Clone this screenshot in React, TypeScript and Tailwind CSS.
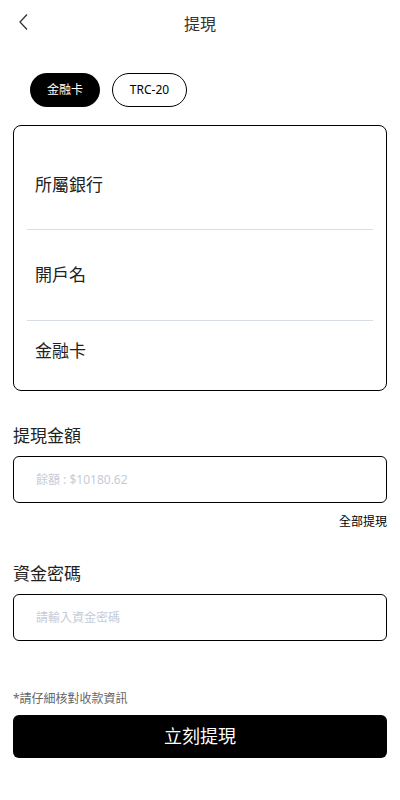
export default function App() {
  return (
    <div
      className="w-[400px] min-h-[800px] bg-white text-[#222] pb-10"
      style={{ fontFamily: '"Noto Sans", "Noto Sans CJK TC", sans-serif' }}
    >
      {/* header */}
      <div className="relative h-[48px] flex items-center justify-center">
        <svg
          className="absolute left-[17px] top-[13px]"
          width="14"
          height="18"
          viewBox="0 0 14 18"
          fill="none"
        >
          <path d="M10 1.5 L3 9 L10 16.5" stroke="#333" strokeWidth="1.3" />
        </svg>
        <span className="text-[16px] text-[#333]">提現</span>
      </div>

      {/* tabs */}
      <div className="flex gap-3 pl-[30px] mt-[25px]">
        <button className="w-[70px] h-[34px] rounded-full bg-black text-white text-[12px]">
          金融卡
        </button>
        <button className="w-[75px] h-[34px] rounded-full border border-black text-black text-[12px]">
          TRC-20
        </button>
      </div>

      <div className="px-[13px]">
        {/* card */}
        <div className="mt-[18px] h-[266px] border border-black rounded-[8px] pt-[13px] px-[13px]">
          <div className="h-[91px] flex items-end pb-[32px] pl-[8px] border-b border-[#d7dde5] text-[17px]">
            所屬銀行
          </div>
          <div className="h-[91px] flex items-center pl-[8px] border-b border-[#d7dde5] text-[17px]">
            開戶名
          </div>
          <div className="h-[60px] flex items-center pl-[8px] text-[17px]">
            金融卡
          </div>
        </div>

        {/* amount */}
        <div className="mt-[33px] text-[17px] leading-[24px]">提現金額</div>
        <div className="mt-[8px] h-[47px] border border-black rounded-[6px] flex items-center pl-[22px] text-[12px] text-[#c5cbd8]">
          餘額 : $10180.62
        </div>
        <div className="mt-[10px] text-right text-[12px] text-black">全部提現</div>

        {/* password */}
        <div className="mt-[31px] text-[17px] leading-[24px]">資金密碼</div>
        <div className="mt-[8px] h-[47px] border border-black rounded-[6px] flex items-center pl-[22px] text-[12px] text-[#c5cbd8]">
          請輸入資金密碼
        </div>

        <div className="mt-[49px] text-[12px] text-[#666]">*請仔細核對收款資訊</div>
        <button className="mt-[7px] w-full h-[43px] bg-black rounded-[6px] text-white text-[18px]">
          立刻提現
        </button>
      </div>
    </div>
  )
}
